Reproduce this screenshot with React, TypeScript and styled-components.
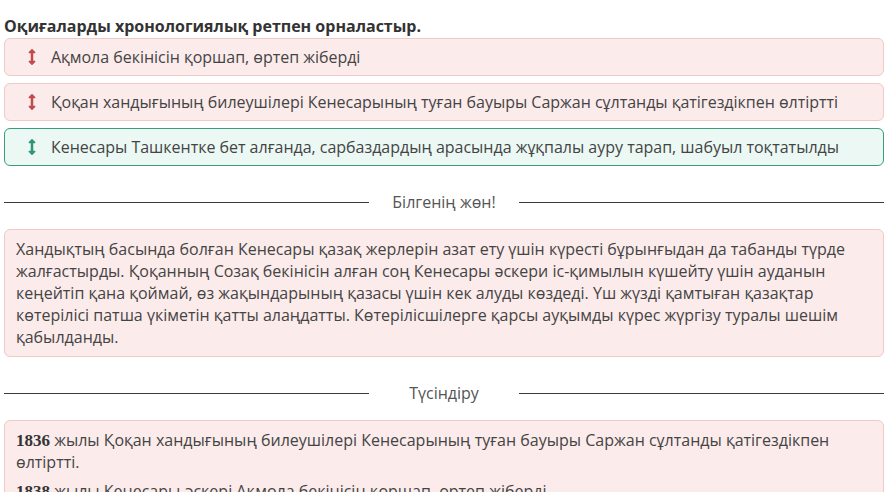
import React from 'react';
import styled, { createGlobalStyle } from 'styled-components';
import { FaArrowsAltV } from 'react-icons/fa';

const GlobalStyle = createGlobalStyle`
  body {
    margin: 0;
    background: #ffffff;
    font-family: 'Open Sans', 'Noto Sans', sans-serif;
    color: #444;
  }
`;

type Tone = 'wrong' | 'right';

const tones = {
  wrong: { bg: '#fcebeb', border: '#f1c9c9', icon: '#c24a4c' },
  right: { bg: '#ebf8f4', border: '#3c9a80', icon: '#2f9479' },
};

const Page = styled.div`
  padding: 16px 3px 0 4px;
`;

const Title = styled.h1`
  margin: 0 0 2px;
  font-size: 16px;
  line-height: 20px;
  font-weight: 700;
  color: #333;
`;

const ItemList = styled.div`
  display: flex;
  flex-direction: column;
  gap: 7px;
`;

const Item = styled.div<{ tone: Tone }>`
  display: flex;
  align-items: center;
  height: 38px;
  box-sizing: border-box;
  padding: 0 14px 0 22px;
  border: 1px solid ${({ tone }) => tones[tone].border};
  border-radius: 6px;
  background: ${({ tone }) => tones[tone].bg};
  font-size: 16px;
  letter-spacing: -0.02px;
  color: #444;
`;

const Handle = styled.span<{ tone: Tone }>`
  display: flex;
  width: 10px;
  margin-right: 14px;
  color: ${({ tone }) => tones[tone].icon};
  font-size: 16px;
`;

const Divider = styled.div`
  display: grid;
  grid-template-columns: 1fr 150px 1fr;
  align-items: center;
  margin: 25px 0 16px;
  font-size: 16px;
  line-height: 22px;
  color: #555;
  text-align: center;

  &::before,
  &::after {
    content: '';
    height: 1px;
    background: #3a3a3a;
  }
`;

const Note = styled.div`
  padding: 8px 11px;
  border: 1px solid #f1c9c9;
  border-radius: 6px;
  background: #fcebeb;
  font-size: 16px;
  line-height: 22px;
  color: #444;
`;

const Para = styled.p`
  margin: 0 0 7px;
`;

const Year = styled.b`
  font-family: 'Liberation Serif', 'DejaVu Serif', serif;
  font-size: 17px;
  line-height: 1;
  color: #333;
`;

const items: { text: string; tone: Tone }[] = [
  { text: 'Ақмола бекінісін қоршап, өртеп жіберді', tone: 'wrong' },
  {
    text: 'Қоқан хандығының билеушілері Кенесарының туған бауыры Саржан сұлтанды қатігездікпен өлтіртті',
    tone: 'wrong',
  },
  {
    text: 'Кенесары Ташкентке бет алғанда, сарбаздардың арасында жұқпалы ауру тарап, шабуыл тоқтатылды',
    tone: 'right',
  },
];

const App: React.FC = () => {
  return (
    <Page>
      <GlobalStyle />
      <Title>Оқиғаларды хронологиялық ретпен орналастыр.</Title>
      <ItemList>
        {items.map(({ text, tone }) => (
          <Item key={text} tone={tone}>
            <Handle tone={tone}>
              <FaArrowsAltV />
            </Handle>
            {text}
          </Item>
        ))}
      </ItemList>

      <Divider>Білгенің жөн!</Divider>
      <Note>
        Хандықтың басында болған Кенесары қазақ жерлерін азат ету үшін күресті бұрынғыдан да табанды түрде
        жалғастырды. Қоқанның Созақ бекінісін алған соң Кенесары әскери іс-қимылын күшейту үшін ауданын
        кеңейтіп қана қоймай, өз жақындарының қазасы үшін кек алуды көздеді. Үш жүзді қамтыған қазақтар
        көтерілісі патша үкіметін қатты алаңдатты. Көтерілісшілерге қарсы ауқымды күрес жүргізу туралы шешім
        қабылданды.
      </Note>

      <Divider>Түсіндіру</Divider>
      <Note>
        <Para>
          <Year>1836</Year> жылы Қоқан хандығының билеушілері Кенесарының туған бауыры Саржан сұлтанды
          қатігездікпен өлтіртті.
        </Para>
        <Para>
          <Year>1838</Year> жылы Кенесары әскері Ақмола бекінісін қоршап, өртеп жіберді.
        </Para>
        <Para>
          <Year>1845</Year> жылы Кенесары Ташкентке бет алғанда, сарбаздардың арасында жұқпалы ауру тарап,
          шабуыл тоқтатылды.
        </Para>
      </Note>
    </Page>
  );
};

export default App;
